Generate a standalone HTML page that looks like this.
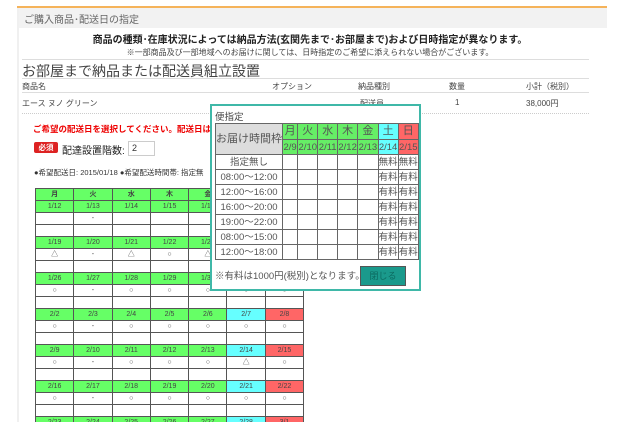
<!DOCTYPE html>
<html><head><meta charset="utf-8"><style>
*{margin:0;padding:0;box-sizing:border-box}
body{width:620px;height:430px;background:#fff;font-family:"Liberation Sans","Noto Sans CJK JP",sans-serif;color:#333;position:relative;overflow:hidden}
.a{position:absolute;white-space:nowrap}
.cal{position:absolute;left:35px;top:188px;border-collapse:collapse;table-layout:fixed;font-size:7px}
.cal td{border:1px solid #555;height:12px;width:38.3px;text-align:center;padding:0;line-height:10px;color:#444}
.cal tr.h td{background:#66ff66;font-weight:bold}
.cal tr.d td{background:#66ff66;border-bottom:1px dotted #555}
.cal tr.d td.s{background:#66ffff}.cal tr.d td.u{background:#ff6666}
.pop{position:absolute;left:210px;top:104px;width:211px;height:187px;border:2px solid #3fb8a8;background:#fff}
.pt{position:absolute;left:3px;top:17px;border-collapse:collapse;table-layout:fixed;font-size:9.5px;color:#555}
.pt td{border:1px solid #666;height:15px;text-align:center;padding:0;white-space:nowrap;overflow:hidden;line-height:13px}
.g{background:#66ee66}.c{background:#66ffff}.r{background:#ff6666}
.pt tr.w td{font-size:11px;height:16px}
</style></head><body>
<div class="a" style="left:17px;top:6px;width:590px;height:2px;background:#f5b35a"></div>
<div class="a" style="left:17px;top:8px;width:590px;height:20px;background:#f2f2f2"></div>
<div class="a" style="left:17px;top:8px;width:2px;height:414px;background:#f0f0f0"></div>
<div class="a" style="left:24px;top:11px;font-size:10px;color:#666">ご購入商品･配送日の指定</div>
<div class="a" style="left:0;width:620px;top:35px;text-align:center;font-size:10px;font-weight:bold;color:#222;line-height:12px">商品の種類･在庫状況によっては納品方法(玄関先まで･お部屋まで)および日時指定が異なります。</div>
<div class="a" style="left:0;width:620px;top:48px;text-align:center;font-size:8px;color:#444;line-height:10px">※一部商品及び一部地域へのお届けに関しては、日時指定のご希望に添えられない場合がございます。</div>
<div class="a" style="left:22px;top:59px;width:567px;height:1px;background:#ddd"></div>
<div class="a" style="left:22px;top:61px;font-size:14px;color:#444">お部屋まで納品または配送員組立設置</div>
<div class="a" style="left:22px;top:78px;width:567px;height:1px;background:#ddd"></div>
<div class="a" style="left:22px;top:81px;font-size:8px;color:#444">商品名</div>
<div class="a" style="left:272px;top:81px;font-size:8px;color:#444">オプション</div>
<div class="a" style="left:358px;top:81px;font-size:8px;color:#444">納品種別</div>
<div class="a" style="left:449px;top:81px;font-size:8px;color:#444">数量</div>
<div class="a" style="left:526px;top:81px;font-size:8px;color:#444">小計（税別）</div>
<div class="a" style="left:22px;top:92px;width:567px;height:1px;background:#ddd"></div>
<div class="a" style="left:22px;top:98px;font-size:8px;color:#444">エース ヌノ グリーン</div>
<div class="a" style="left:360px;top:98px;font-size:8px;color:#444">配送員</div>
<div class="a" style="left:455px;top:98px;font-size:8px;color:#444">1</div>
<div class="a" style="left:526px;top:98px;font-size:8px;color:#444">38,000円</div>
<div class="a" style="left:22px;top:113px;width:567px;border-top:1px dotted #ccc"></div>
<div class="a" style="left:33px;top:123px;font-size:8.5px;font-weight:bold;color:#e00">ご希望の配送日を選択してください。配送日はご注文</div>
<div class="a" style="left:34px;top:142px;width:24px;height:11px;background:#d22;border-radius:2px;color:#fff;font-size:7.5px;text-align:center;line-height:11px;font-weight:bold">必須</div>
<div class="a" style="left:62px;top:142px;font-size:10px;color:#222">配達設置階数:</div>
<div class="a" style="left:128px;top:141px;width:27px;height:15px;border:1px solid #ccc;font-size:9px;padding-left:3px;line-height:13px">2</div>
<div class="a" style="left:34px;top:167px;font-size:7.5px;color:#333">●希望配送日: 2015/01/18 ●希望配送時間帯: 指定無</div>
<table class="cal">
<tr class="h"><td>月</td><td>火</td><td>水</td><td>木</td><td>金</td><td>土</td><td>日</td></tr>
<tr class="d"><td>1/12</td><td>1/13</td><td>1/14</td><td>1/15</td><td>1/16</td><td class="s">1/17</td><td class="u">1/18</td></tr>
<tr><td></td><td>-</td><td></td><td></td><td></td><td></td><td></td></tr>
<tr><td></td><td></td><td></td><td></td><td></td><td></td><td></td></tr>
<tr class="d"><td>1/19</td><td>1/20</td><td>1/21</td><td>1/22</td><td>1/23</td><td class="s">1/24</td><td class="u">1/25</td></tr>
<tr><td>△</td><td>-</td><td>△</td><td>○</td><td>△</td><td>○</td><td>○</td></tr>
<tr><td></td><td></td><td></td><td></td><td></td><td></td><td></td></tr>
<tr class="d"><td>1/26</td><td>1/27</td><td>1/28</td><td>1/29</td><td>1/30</td><td class="s">1/31</td><td class="u">2/1</td></tr>
<tr><td>○</td><td>-</td><td>○</td><td>○</td><td>○</td><td>○</td><td>○</td></tr>
<tr><td></td><td></td><td></td><td></td><td></td><td></td><td></td></tr>
<tr class="d"><td>2/2</td><td>2/3</td><td>2/4</td><td>2/5</td><td>2/6</td><td class="s">2/7</td><td class="u">2/8</td></tr>
<tr><td>○</td><td>-</td><td>○</td><td>○</td><td>○</td><td>○</td><td>○</td></tr>
<tr><td></td><td></td><td></td><td></td><td></td><td></td><td></td></tr>
<tr class="d"><td>2/9</td><td>2/10</td><td>2/11</td><td>2/12</td><td>2/13</td><td class="s">2/14</td><td class="u">2/15</td></tr>
<tr><td>○</td><td>-</td><td>○</td><td>○</td><td>○</td><td>△</td><td>○</td></tr>
<tr><td></td><td></td><td></td><td></td><td></td><td></td><td></td></tr>
<tr class="d"><td>2/16</td><td>2/17</td><td>2/18</td><td>2/19</td><td>2/20</td><td class="s">2/21</td><td class="u">2/22</td></tr>
<tr><td>○</td><td>-</td><td>○</td><td>○</td><td>○</td><td>○</td><td>○</td></tr>
<tr><td></td><td></td><td></td><td></td><td></td><td></td><td></td></tr>
<tr class="d"><td>2/23</td><td>2/24</td><td>2/25</td><td>2/26</td><td>2/27</td><td class="s">2/28</td><td class="u">3/1</td></tr>
</table>
<div class="a" style="left:17px;top:422px;width:603px;height:8px;background:#fff"></div>
<div class="pop">
<div class="a" style="left:3px;top:3px;font-size:9.5px;color:#444">便指定</div>
<table class="pt">
<colgroup><col style="width:58px"><col style="width:17px"><col style="width:22px"><col style="width:21px"><col style="width:22px"><col style="width:22px"><col style="width:20px"><col style="width:21px"></colgroup>
<tr class="w"><td rowspan="2" style="background:#ddd">お届け時間枠</td><td class="g">月</td><td class="g">火</td><td class="g">水</td><td class="g">木</td><td class="g">金</td><td class="c">土</td><td class="r">日</td></tr>
<tr><td class="g" style="height:13px">2/9</td><td class="g">2/10</td><td class="g">2/11</td><td class="g">2/12</td><td class="g">2/13</td><td class="c">2/14</td><td class="r">2/15</td></tr>
<tr><td>指定無し</td><td></td><td></td><td></td><td></td><td></td><td>無料</td><td>無料</td></tr>
<tr><td>08:00～12:00</td><td></td><td></td><td></td><td></td><td></td><td>有料</td><td>有料</td></tr>
<tr><td>12:00～16:00</td><td></td><td></td><td></td><td></td><td></td><td>有料</td><td>有料</td></tr>
<tr><td>16:00～20:00</td><td></td><td></td><td></td><td></td><td></td><td>有料</td><td>有料</td></tr>
<tr><td>19:00～22:00</td><td></td><td></td><td></td><td></td><td></td><td>有料</td><td>有料</td></tr>
<tr><td>08:00～15:00</td><td></td><td></td><td></td><td></td><td></td><td>有料</td><td>有料</td></tr>
<tr><td>12:00～18:00</td><td></td><td></td><td></td><td></td><td></td><td>有料</td><td>有料</td></tr>
</table>
<div class="a" style="left:3px;top:162px;font-size:9.5px;color:#555">※有料は1000円(税別)となります。</div>
<div class="a" style="left:148px;top:160px;width:46px;height:20px;background:#1a9a8c;border:1px solid #555;color:#0c6a60;font-size:9px;text-align:center;line-height:18px">閉じる</div>
</div>
</body></html>
